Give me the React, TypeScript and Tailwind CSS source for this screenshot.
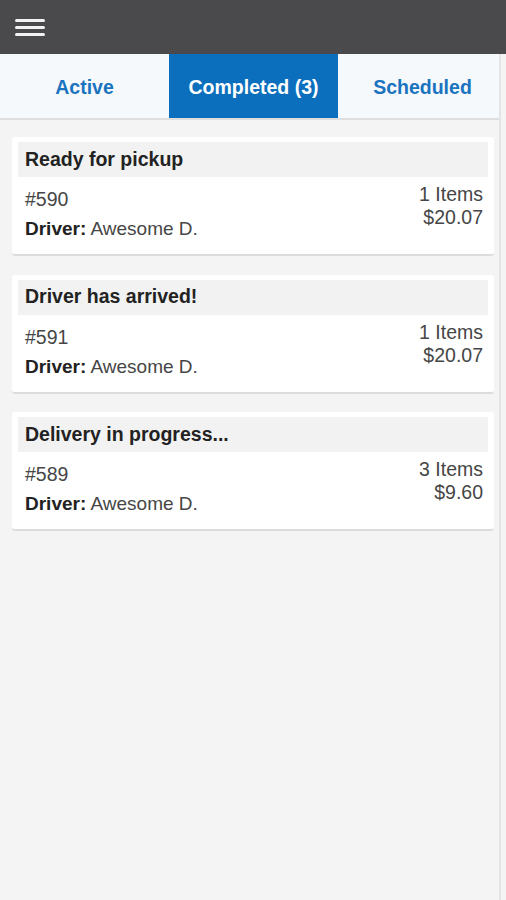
import React from "react";

const orders = [
  { title: "Ready for pickup", id: "#590", items: "1 Items", price: "$20.07" },
  { title: "Driver has arrived!", id: "#591", items: "1 Items", price: "$20.07" },
  { title: "Delivery in progress...", id: "#589", items: "3 Items", price: "$9.60" },
];

export default function App() {
  return (
    <div
      className="w-[506px] h-[900px] bg-[#f4f4f4] flex flex-col overflow-hidden"
      style={{ fontFamily: '"Liberation Sans", Arial, sans-serif' }}
    >
      <header className="h-[54px] bg-[#4a4a4c] flex items-center pl-[15px] shrink-0">
        <div className="flex flex-col gap-[4px] mt-[1px]">
          <div className="w-[30px] h-[3px] rounded-full bg-[#f2f2f2]" />
          <div className="w-[30px] h-[3px] rounded-full bg-[#f2f2f2]" />
          <div className="w-[30px] h-[3px] rounded-full bg-[#f2f2f2]" />
        </div>
      </header>
      <div className="flex flex-1">
        <div className="w-[501px] flex flex-col border-r-2 border-[#e4e4e4]">
          <nav className="h-[66px] flex bg-[#f6f9fc] border-b-2 border-[#dedede] shrink-0">
            <div className="w-[169px] flex items-center justify-center pt-[4px] text-[19.5px] font-bold text-[#1a73bf]">
              Active
            </div>
            <div className="w-[169px] flex items-center justify-center pt-[4px] text-[19.5px] font-bold text-white bg-[#0b6fbe]">
              Completed (3)
            </div>
            <div className="flex-1 flex items-center justify-center pt-[4px] text-[19.5px] font-bold text-[#1a73bf] pl-[8px]">
              Scheduled
            </div>
          </nav>
          <div className="flex flex-col gap-[18.5px] pt-[17px] pl-[12px] w-[494px]">
            {orders.map((o) => (
              <div
                key={o.id}
                className="bg-white rounded-[3px] border-b-2 border-[#dcdcdc] px-[6px] pt-[5px] pb-[13px]"
              >
                <div className="h-[35px] bg-[#f2f2f2] flex items-center px-[7px] text-[19.5px] font-bold text-[#222]">
                  {o.title}
                </div>
                <div className="flex justify-between pl-[7px] pr-[5px] pt-[6px] text-[#464646]">
                  <div className="flex flex-col">
                    <div className="text-[19.5px] leading-[24px] mt-[4px]">{o.id}</div>
                    <div className="text-[19px] leading-[24px] mt-[6px]">
                      <span className="font-bold text-[#222]">Driver:</span> Awesome D.
                    </div>
                  </div>
                  <div className="flex flex-col items-end text-[19.5px] leading-[23px]">
                    <div>{o.items}</div>
                    <div>{o.price}</div>
                  </div>
                </div>
              </div>
            ))}
          </div>
        </div>
      </div>
    </div>
  );
}
